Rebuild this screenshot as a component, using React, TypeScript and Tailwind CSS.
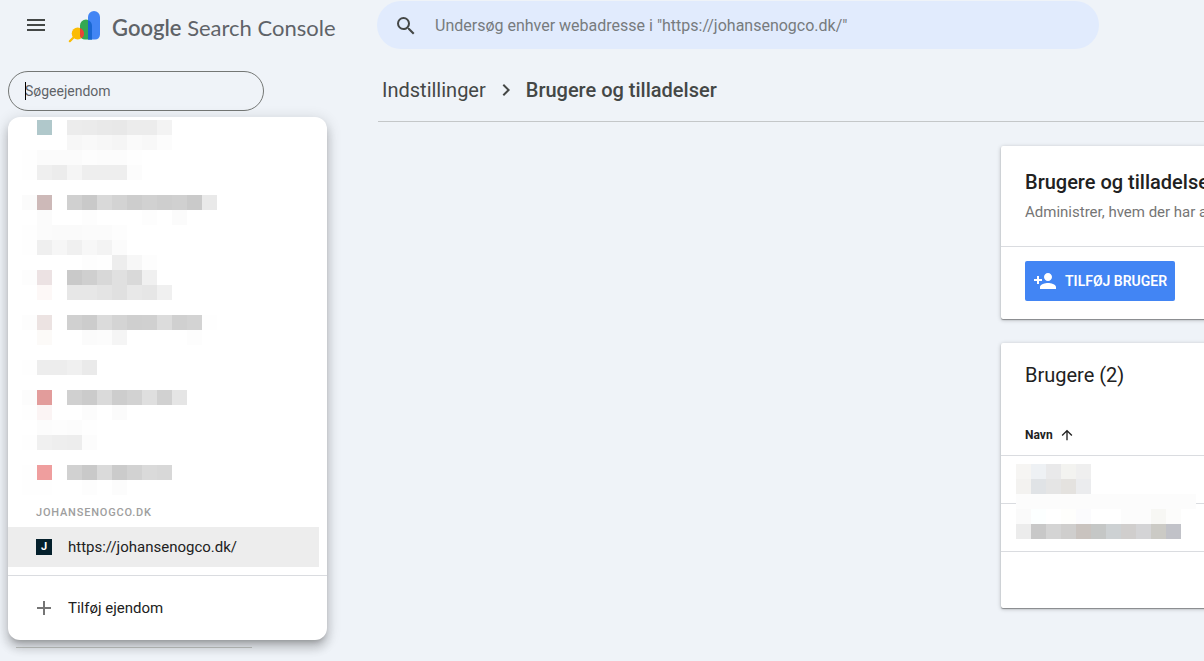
import { MdAdd, MdArrowUpward, MdChevronRight, MdMenu, MdPersonAdd, MdSearch } from "react-icons/md";

// One string per row, one token per 15px cell: "-" is empty, two digits are a grey level, six a full colour
const propertyRows = [
  "- b0c8cb - ec eb e9 e8 ec ec f3",
  "- - - f7 f9 f7 f5 fa f8 fc",
  "fe fb fb fb fd fc fc fe",
  "fe ef ec f5 ee ee ee fc",
  "-",
  "fb cdb9b8 - d0 c9 d9 d3 cd d1 ce d0 ca e9",
  "- fb - - fd - - - fd - fb",
  "fe fb fa fa fb fb fd",
  "fe ef f6 f0 f7 f3 fb",
  "- - - - fd fe ed f7 fd",
  "fd ece2e3 - c9 cf d8 e0 d9 f0",
  "- fdf8f7 - e7 e7 e4 e0 e8 e6 f0",
  "-",
  "fd ece3e2 - d0 cc db d4 cf d0 dc d0 d3 fe",
  "- fcfaf8 - - fb fc f5 - - - - fd",
  "-",
  "fe ed ed f0 ea",
  "-",
  "fc e29c9b - d0 cb da cd d2 df d1 e5",
  "fe fbf4f4 - - fc - fb",
  "- fc fd fc fe",
  "fe f0 ee ed fc",
  "-",
  "fe ef9e9e - d1 c9 da cb d2 da d8",
  "fe fe - - fd - fc",
];

const userRows = [
  "f6f5f3 eef1f4 e9e9ea f3f3f0 efefef",
  "f3f2f0 e0e3e6 e5e5e5 e4e2df ebecee",
  "fc fc fc fc fc fc fc fc fc fc fc fc",
  "fa fcffff ff fefefc fbfbfd ff ff fc fc f7f7f4 fcfcfb",
  "ec c8 d4 cfcecd c9c3bf c5c7c6 cdd1d3 d0cecd d4d4d6 cbcac5 c1c2c8",
];

function cellColor(token: string) {
  if (token === "-") return "transparent";
  return token.length === 2 ? `#${token.repeat(3)}` : `#${token}`;
}

function Redacted({ rows }: { rows: string[] }) {
  return (
    <div aria-hidden="true">
      {rows.map((row, y) => (
        <div key={y} className="flex h-[15px]">
          {row.split(" ").map((token, x) => (
            <div key={x} className="h-[15px] w-[15px] shrink-0" style={{ backgroundColor: cellColor(token) }} />
          ))}
        </div>
      ))}
    </div>
  );
}

function Logo() {
  return (
    <svg className="h-8 w-8 shrink-0" viewBox="0 0 32 32" fill="none" aria-hidden="true">
      <path d="M1.8 30.2 7 25" stroke="#fbbc04" strokeWidth="2.2" strokeLinecap="round" />
      <circle cx="9.7" cy="22.4" r="6" fill="#fbbc04" />
      <path d="M12 14.4a6 6 0 0 1 12 0V28.6h-7a5 5 0 0 1-5-5z" fill="#34a853" />
      <path d="M12 16.9a6 6 0 0 1 1.7 10.4A5 5 0 0 1 12 23.6z" fill="#ea4335" />
      <path d="M20 6a6 6 0 0 1 12 0v17.6a5 5 0 0 1-5 5h-7z" fill="#4285f4" />
      <path d="M20 9.2a6 6 0 0 1 4 5.2V28.6h-4z" fill="#1967d2" />
    </svg>
  );
}

function Header() {
  return (
    <header className="flex h-[50px] pt-px">
      <div className="flex w-[377px] shrink-0 items-center pb-[2px] pl-6">
        <button type="button" aria-label="Menu" className="text-[#444746]">
          <MdMenu size={24} />
        </button>
        <a href="#" className="ml-5 flex items-center gap-3 pt-1 text-[#5f6368]">
          <Logo />
          <span className="pt-[2px] font-[Lato,sans-serif] text-[22px] whitespace-nowrap">
            <span className="font-semibold">Google</span> Search Console
          </span>
        </a>
      </div>
      <label className="flex h-12 max-w-[722px] flex-1 items-center gap-[17px] rounded-full bg-[#e1ebfd] px-[17px] pt-[2px] text-[#444746]">
        <MdSearch size={24} className="shrink-0" />
        <input
          type="search"
          aria-label="Undersøg webadresse"
          placeholder={'Undersøg enhver webadresse i "https://johansenogco.dk/"'}
          className="w-full bg-transparent text-base outline-none placeholder:text-[#777b7d]"
        />
      </label>
    </header>
  );
}

function PropertyMenu() {
  return (
    <div className="absolute top-full left-0 z-10 mt-[6px] w-[319px] rounded-xl bg-white pt-[3px] shadow-[0_5px_5px_-3px_rgba(0,0,0,0.2),0_8px_10px_1px_rgba(0,0,0,0.14),0_3px_14px_2px_rgba(0,0,0,0.12)]">
      <div className="pl-[14px]">
        <Redacted rows={propertyRows} />
      </div>
      <h2 className="flex h-8 items-center pt-1 pl-7 text-[11px] font-medium tracking-[0.8px] text-[#9e9e9e] uppercase">
        johansenogco.dk
      </h2>
      <a href="#" className="mr-2 flex h-10 items-center gap-4 bg-[#ededed] pl-7 text-[15px] text-[#212121]">
        <span className="flex h-4 w-4 items-center justify-center bg-[#04202c] text-[11px] font-bold text-white">J</span>
        https://johansenogco.dk/
      </a>
      <button
        type="button"
        className="mt-2 flex h-[65px] w-full items-center gap-3 border-t border-[#dadce0] pl-6 text-[15px] text-[#212121]"
      >
        <MdAdd size={24} className="text-[#757575]" />
        Tilføj ejendom
      </button>
    </div>
  );
}

function Sidebar() {
  return (
    <aside className="flex w-[378px] shrink-0 flex-col pt-[21px] pl-2">
      <div className="relative w-64">
        <input
          type="text"
          aria-label="Søgeejendom"
          placeholder="Søgeejendom"
          className="h-10 w-full rounded-full border border-[#747775] px-4 text-sm outline-none placeholder:text-[#5f6368]"
        />
        <span className="absolute top-[11px] left-[17px] h-[18px] w-px bg-black" />
        <PropertyMenu />
      </div>
      <hr className="mt-auto mb-[13px] ml-2 w-[236px] border-[#c4c7c5]" />
    </aside>
  );
}

const cardClass =
  "w-[480px] rounded-[2px] bg-white shadow-[0_1px_1px_rgba(0,0,0,0.35),0_1px_4px_rgba(0,0,0,0.25)]";

function PermissionsCard() {
  return (
    <section className={cardClass}>
      <div className="h-[101px] border-b border-[#dadce0] px-6 pt-6">
        <h2 className="text-xl leading-6 font-medium text-[#212121]">Brugere og tilladelser</h2>
        <p className="mt-2 text-[15px] leading-5 text-[#757575]">Administrer, hvem der har adgang</p>
      </div>
      <div className="px-6 pt-[14px] pb-[18px]">
        <button
          type="button"
          className="flex h-10 items-center gap-2 rounded-[2px] bg-[#4285f4] px-2 text-sm font-semibold text-white uppercase"
        >
          <MdPersonAdd size={24} />
          Tilføj bruger
        </button>
      </div>
    </section>
  );
}

function UsersCard() {
  return (
    <section className={cardClass}>
      <h2 className="flex h-16 items-center px-6 text-xl text-[#212121]">Brugere (2)</h2>
      <div className="relative">
        <table className="w-full border-collapse">
          <thead>
            <tr className="h-12 border-b border-[#dadce0]">
              <th className="px-6 pt-2 text-left text-xs font-bold text-[#212121]">
                <button type="button" className="flex items-center gap-[6px]">
                  Navn
                  <MdArrowUpward size={16} />
                </button>
              </th>
            </tr>
          </thead>
          <tbody>
            <tr className="h-12 border-b border-[#dadce0]">
              <td />
            </tr>
            <tr className="h-12 border-b border-[#dadce0]">
              <td />
            </tr>
          </tbody>
        </table>
        <div className="absolute top-[57px] left-[15px]">
          <Redacted rows={userRows} />
        </div>
      </div>
      <div className="h-14" />
    </section>
  );
}

export default function App() {
  return (
    <div className="flex min-h-screen flex-col overflow-hidden bg-[#eff3f8] font-[Roboto,sans-serif]">
      <Header />
      <div className="flex flex-1">
        <Sidebar />
        <main className="min-w-0 flex-1">
          <nav
            aria-label="Brødkrumme"
            className="flex h-[72px] items-center gap-2 border-b border-[#c4c7c9] pt-2 pl-1 text-xl text-[#444746]"
          >
            <a href="#">Indstillinger</a>
            <MdChevronRight size={24} />
            <span className="font-medium">Brugere og tilladelser</span>
          </nav>
          <div className="ml-auto flex w-[203px] flex-col gap-6 pt-6">
            <PermissionsCard />
            <UsersCard />
          </div>
        </main>
      </div>
    </div>
  );
}
